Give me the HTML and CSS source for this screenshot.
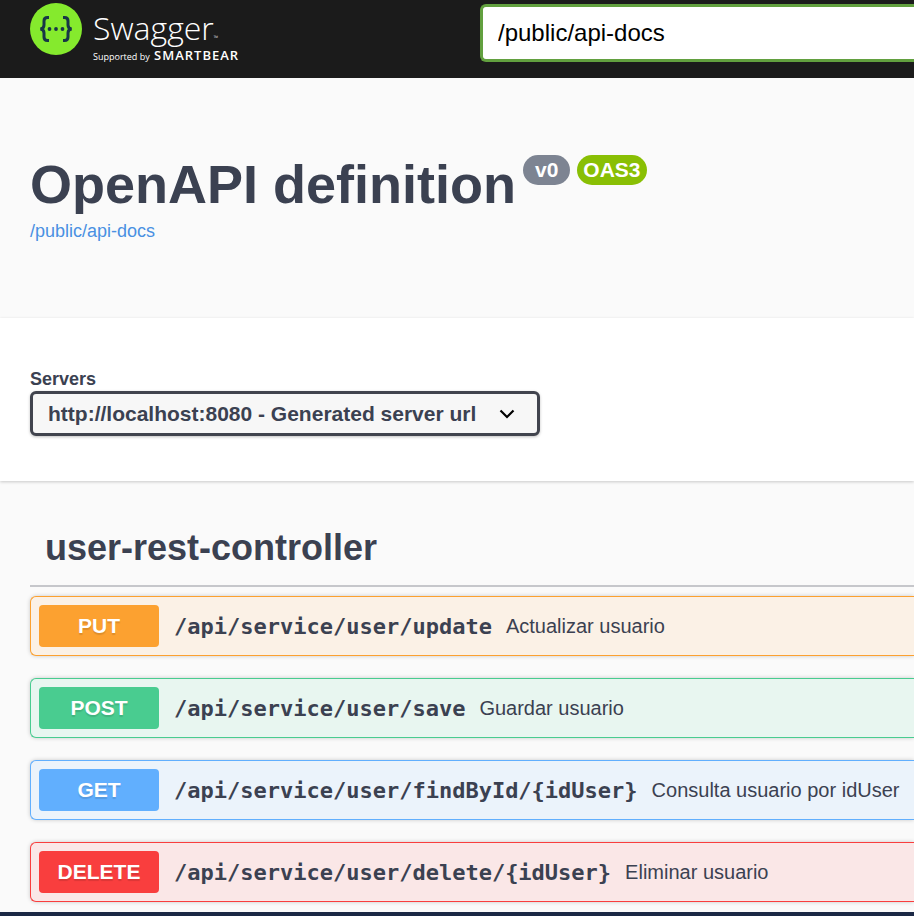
FILE: index.html
```html
<!DOCTYPE html>
<html lang="en">
<head>
<meta charset="utf-8">
<meta name="viewport" content="width=device-width, initial-scale=1">
<title>Swagger UI</title>
<link rel="stylesheet" href="styles.css">
</head>
<body>
<header class="topbar">
  <a class="logo" href="#" aria-label="Swagger, supported by SmartBear">
    <svg class="logo-mark" viewBox="0 0 52 52" aria-hidden="true">
      <circle cx="26" cy="26" r="26" fill="#85ea2d"/>
      <g fill="none" stroke="#173647" stroke-width="3">
        <path d="M19 14.500h-1.500q-3.500 0-3.500 3.500v4q0 3.700-3.700 4 3.700.3 3.700 4v4q0 3.500 3.500 3.500H19"/>
        <path d="M33 14.500h1.500q3.500 0 3.500 3.500v4q0 3.700 3.700 4-3.700.3-3.700 4v4q0 3.500-3.500 3.500H33"/>
      </g>
      <g fill="#173647"><circle cx="19.500" cy="26" r="1.900"/><circle cx="26" cy="26" r="1.900"/><circle cx="32.500" cy="26" r="1.900"/></g>
    </svg>
    <span class="logo-text">
      <span class="brand">Swagger<small class="tm">™</small></span>
      <span class="support">Supported by <b class="maker">SMARTBEAR</b></span>
    </span>
  </a>
  <form class="explore"><input class="explore-input" type="text" value="/public/api-docs" aria-label="API definition URL"></form>
</header>
<main>
  <section class="info">
    <div class="title-row">
      <h1 class="title">OpenAPI definition</h1>
      <span class="badge">v0</span>
      <span class="badge badge-oas">OAS3</span>
    </div>
    <a class="info-link" href="#">/public/api-docs</a>
  </section>
  <section class="servers">
    <label class="servers-label" for="server">Servers</label>
    <div class="select-wrap">
      <select class="server-select" id="server"><option>http://localhost:8080 - Generated server url</option></select>
      <svg class="chevron" viewBox="0 0 16 10" aria-hidden="true"><path d="M1.500 1.500 8 8l6.500-6.500" fill="none" stroke="#000" stroke-width="2.200"/></svg>
    </div>
  </section>
  <section class="operations">
    <h2 class="tag">user-rest-controller</h2>
    <div class="op-list">
      <article class="op put"><button class="method" type="button">PUT</button><code class="path">/api/service/user/update</code><span class="summary">Actualizar usuario</span></article>
      <article class="op post"><button class="method" type="button">POST</button><code class="path">/api/service/user/save</code><span class="summary">Guardar usuario</span></article>
      <article class="op get"><button class="method" type="button">GET</button><code class="path">/api/service/user/findById/{idUser}</code><span class="summary">Consulta usuario por idUser</span></article>
      <article class="op delete"><button class="method" type="button">DELETE</button><code class="path">/api/service/user/delete/{idUser}</code><span class="summary">Eliminar usuario</span></article>
    </div>
  </section>
</main>
<footer class="bottom-bar"></footer>
</body>
</html>
```
FILE: styles.css
```css
* { box-sizing: border-box; }
body {
  margin: 0;
  min-height: 100vh;
  display: flex;
  flex-direction: column;
  background: #fafafa;
  color: #3b4151;
  font-family: "Liberation Sans", Arial, sans-serif;
}
h1, h2 { margin: 0; }

.topbar {
  display: grid;
  grid-template-columns: 450px 1fr;
  align-items: start;
  padding: 3px 0 12px 30px;
  background: #1b1b1b;
}
.logo {
  display: flex;
  gap: 11px;
  color: #fff;
  text-decoration: none;
  font-family: "Open Sans", "Noto Sans", sans-serif;
}
.logo-mark { width: 52px; height: 52px; }
.logo-text { display: flex; flex-direction: column; padding-top: 4px; }
.brand { font-size: 32px; font-weight: 300; line-height: 41px; }
.tm { font-size: 6px; line-height: 0; }
.support { font-size: 9px; line-height: 18px; white-space: nowrap; }
.maker { margin-left: 2px; font-size: 13px; font-weight: 600; line-height: 0; letter-spacing: 1px; }
.explore { padding-top: 1px; }
.explore-input {
  display: block;
  width: 100%;
  height: 58px;
  padding: 0 15px;
  border: 3px solid #62a03f;
  border-right: 0;
  border-radius: 6px 0 0 6px;
  background: #fff;
  color: #000;
  font: 24px "Liberation Sans", Arial, sans-serif;
}

.info { padding: 74px 30px; }
.title-row { display: flex; align-items: flex-start; gap: 7px; }
.title { font-size: 54px; line-height: 64px; }
.badge {
  margin-top: 3px;
  padding: 0 12px;
  border-radius: 15px;
  background: #7d8492;
  color: #fff;
  font-size: 21px;
  font-weight: bold;
  line-height: 30px;
}
.badge-oas { padding: 0 6px; background: #89bf04; }
.info-link {
  display: block;
  padding: 3px 0 1px;
  color: #4990e2;
  font-size: 18px;
  line-height: 24px;
  text-decoration: none;
}

.servers {
  padding: 50px 30px 45px;
  background: #fff;
  box-shadow: 0 1px 3px rgba(0, 0, 0, .2);
}
.servers-label { display: block; font-size: 18px; font-weight: bold; line-height: 23px; }
.select-wrap { position: relative; width: fit-content; }
.server-select {
  appearance: none;
  display: block;
  height: 45px;
  padding: 0 60px 0 15px;
  border: 3px solid #41444e;
  border-radius: 6px;
  background: #f7f7f7;
  box-shadow: 0 1px 3px rgba(0, 0, 0, .25);
  color: #3b4151;
  font: bold 21px "Liberation Sans", Arial, sans-serif;
}
.chevron { position: absolute; top: 18px; right: 25px; width: 16px; height: 10px; pointer-events: none; }

.operations { padding: 30px 0 10px 30px; }
.tag {
  padding: 16px 15px;
  border-bottom: 2px solid #c6c7cb;
  font-size: 36px;
  line-height: 42px;
}
.op-list { display: grid; gap: 22px; margin-top: 9px; }
.op {
  display: flex;
  align-items: center;
  height: 60px;
  padding: 0 8px;
  border: 1px solid;
  border-right: 0;
  border-radius: 6px 0 0 6px;
  box-shadow: 0 0 4px rgba(0, 0, 0, .2);
}
.method {
  width: 120px;
  height: 42px;
  margin-right: 15px;
  padding: 0;
  border: 0;
  border-radius: 4px;
  color: #fff;
  font: bold 21px "Liberation Sans", Arial, sans-serif;
  text-shadow: 0 2px 1px rgba(0, 0, 0, .12);
}
.path {
  margin-right: 14px;
  font: bold 22px "DejaVu Sans Mono", monospace;
  white-space: nowrap;
}
.summary { font-size: 20px; white-space: nowrap; }
.put { border-color: #fca130; background: #fbf1e6; }
.put .method { background: #fca130; }
.post { border-color: #49cc90; background: #e8f6f0; }
.post .method { background: #49cc90; }
.get { border-color: #61affe; background: #ebf3fb; }
.get .method { background: #61affe; }
.delete { border-color: #f93e3e; background: #fae7e7; }
.delete .method { background: #f93e3e; }

.bottom-bar { height: 4px; margin-top: auto; background: #1b2845; }
```
